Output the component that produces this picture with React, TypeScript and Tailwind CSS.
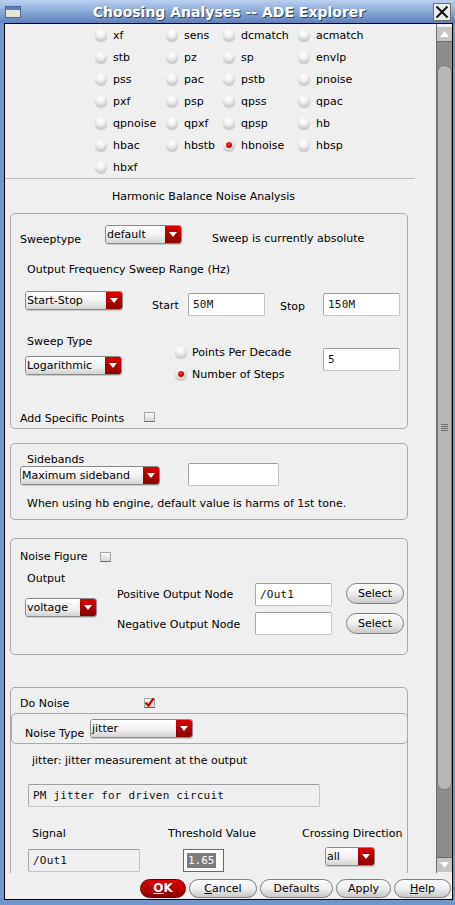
import React from "react";

function Radio({ on }: { on?: boolean }) {
  return (
    <span className="flex h-[12px] w-[12px] shrink-0 items-center justify-center rounded-full bg-[radial-gradient(circle_at_45%_30%,#ffffff_0%,#f0f0f0_40%,#c4c4c4_80%,#9a9a9a_100%)] shadow-[0_1px_1px_rgba(0,0,0,0.2)]">
      {on && (
        <span className="h-[6px] w-[6px] rounded-full bg-[radial-gradient(circle_at_40%_35%,#ff4040,#cc0000_55%,#7a0000)]" />
      )}
    </span>
  );
}

function Drop({ className, text }: { className: string; text: string }) {
  return (
    <div
      className={
        "flex h-[19px] shrink-0 overflow-hidden rounded-[3px] border border-[#8a8a8a] shadow-[0_1px_0_rgba(0,0,0,0.15)] " +
        className
      }
    >
      <div className="flex flex-1 items-center bg-gradient-to-b from-white via-[#f3f3f3] to-[#d4d4d4] pl-[1px] text-[11px] leading-[13px]">
        {text}
      </div>
      <div className="flex w-[16px] items-center justify-center bg-gradient-to-b from-[#dc0000] to-[#8a0000]">
        <svg width="8" height="5" viewBox="0 0 8 5">
          <polygon points="0,0 8,0 4,5" fill="#ffffff" />
        </svg>
      </div>
    </div>
  );
}

function Field({
  className,
  value,
  ro,
}: {
  className: string;
  value: string;
  ro?: boolean;
}) {
  return (
    <div
      className={
        "flex h-[23px] shrink-0 items-center rounded-[2px] border border-[#c4c4c4] border-l-[#a8a8a8] border-t-[#9c9c9c] pl-[4px] font-['DejaVu_Sans_Mono',monospace] text-[11px] tracking-[0.2px] text-[#111] " +
        (ro ? "bg-[#efefef] " : "bg-white ") +
        className
      }
    >
      {value}
    </div>
  );
}

function Check({ on, className }: { on?: boolean; className: string }) {
  return (
    <div
      className={
        "flex h-[10px] w-[11px] shrink-0 items-center justify-center overflow-visible border border-[#a4a4a4] border-b-[#6c6c6c] bg-gradient-to-b from-[#fbfbfb] to-[#d8d8d8] " +
        className
      }
    >
      {on && (
        <svg width="11" height="10" viewBox="0 0 11 10" className="overflow-visible">
          <polyline
            points="1.5,4.5 4.5,7.5 9.5,0.5"
            fill="none"
            stroke="#d00000"
            strokeWidth="2.2"
          />
        </svg>
      )}
    </div>
  );
}

function Pill({ className, children }: { className: string; children: React.ReactNode }) {
  return (
    <div
      className={
        "flex shrink-0 items-center justify-center rounded-full border border-[#7e7e7e] bg-gradient-to-b from-[#fcfcfc] via-[#eeeeee] to-[#c8c8c8] text-[11px] leading-[13px] " +
        className
      }
    >
      {children}
    </div>
  );
}

const rows: string[][] = [
  ["xf", "sens", "dcmatch", "acmatch"],
  ["stb", "pz", "sp", "envlp"],
  ["pss", "pac", "pstb", "pnoise"],
  ["pxf", "psp", "qpss", "qpac"],
  ["qpnoise", "qpxf", "qpsp", "hb"],
  ["hbac", "hbstb", "hbnoise", "hbsp"],
  ["hbxf"],
];

export default function App() {
  return (
    <div className="flex h-[905px] w-[455px] flex-col bg-[#7295cb] font-['DejaVu_Sans',sans-serif] text-[11px] leading-[13px] text-black">
      {/* Title bar */}
      <div className="flex h-[23px] shrink-0 items-center bg-gradient-to-b from-[#bcd0ee] to-[#5c82bc]">
        <div className="ml-[5px] flex h-[12px] w-[16px] flex-col border border-[#4a6894] bg-[#e6e4da]">
          <div className="h-[3px] bg-[#5b7fb8]" />
        </div>
        <div className="flex-1 pl-[4px] text-center text-[14px] font-bold leading-[18px] text-white [text-shadow:1px_1px_0_#2c4266]">
          Choosing Analyses -- ADE Explorer
        </div>
        <div className="mr-[4px] flex h-[18px] w-[18px] items-center justify-center border border-[#6f6f6f] bg-[#ececec]">
          <svg width="14" height="14" viewBox="0 0 14 14">
            <line x1="1.5" y1="1.5" x2="12.5" y2="12.5" stroke="#111" strokeWidth="2" />
            <line x1="12.5" y1="1.5" x2="1.5" y2="12.5" stroke="#111" strokeWidth="2" />
          </svg>
        </div>
      </div>

      {/* Body */}
      <div className="ml-[4px] mr-[2px] flex h-[877px] shrink-0 flex-col border border-black bg-[#efefef]">
        <div className="flex h-[849px] shrink-0">
          {/* viewport */}
          <div className="h-[849px] w-[431px] shrink-0 overflow-hidden">
            <div className="grid grid-cols-[71px_57px_75px_80px] pl-[90px]">
              {rows.map((r, i) =>
                r.map((name) => (
                  <div key={i + name} className="flex h-[22px] items-center gap-[6px]">
                    <Radio on={name === "hbnoise"} />
                    <span>{name}</span>
                  </div>
                ))
              )}
            </div>
            <div className="h-px w-[410px] bg-[#bdbdbd]" />
            <div className="flex h-[34px] items-center pl-[107px]">
              Harmonic Balance Noise Analysis
            </div>

            {/* Box 1 */}
            <div className="ml-[5px] h-[216px] w-[398px] rounded-[5px] border border-[#a9a9a9] pt-[11px]">
              <div className="flex h-[20px] items-start">
                <span className="ml-[9px] mt-[8px] w-[85px]">Sweeptype</span>
                <Drop className="w-[77px]" text="default" />
                <span className="ml-[30px] mt-[7px]">Sweep is currently absolute</span>
              </div>
              <div className="ml-[16px] mt-[18px] h-[13px]">Output Frequency Sweep Range (Hz)</div>
              <div className="mt-[15px] flex h-[25px] items-start">
                <Drop className="ml-[14px] w-[98px]" text="Start-Stop" />
                <span className="ml-[29px] mt-[8px] w-[36px]">Start</span>
                <Field className="mt-[2px] w-[77px]" value="50M" />
                <span className="ml-[15px] mt-[9px] w-[43px]">Stop</span>
                <Field className="mt-[2px] w-[77px]" value="150M" />
              </div>
              <div className="ml-[16px] mt-[19px] h-[11px]">Sweep Type</div>
              <div className="flex h-[34px] items-start">
                <Drop className="ml-[14px] mt-[10px] w-[97px]" text="Logarithmic" />
                <div className="ml-[53px] flex w-[148px] flex-col gap-[10px]">
                  <div className="flex h-[12px] items-center gap-[5px]">
                    <Radio />
                    <span>Points Per Decade</span>
                  </div>
                  <div className="flex h-[12px] items-center gap-[5px]">
                    <Radio on />
                    <span>Number of Steps</span>
                  </div>
                </div>
                <Field className="mt-[2px] w-[77px]" value="5" />
              </div>
              <div className="mt-[32px] flex h-[13px] items-start">
                <span className="ml-[9px] w-[124px]">Add Specific Points</span>
                <Check className="mt-0" />
              </div>
            </div>

            {/* Box 2 */}
            <div className="ml-[5px] mt-[14px] h-[77px] w-[398px] rounded-[5px] border border-[#a9a9a9] pt-[9px]">
              <div className="ml-[16px] h-[10px]">Sidebands</div>
              <div className="flex h-[23px] items-start">
                <Drop className="ml-[9px] mt-[3px] w-[140px]" text="Maximum sideband" />
                <Field className="ml-[28px] w-[91px]" value="" />
              </div>
              <div className="ml-[16px] mt-[11px]">
                When using hb engine, default value is harms of 1st tone.
              </div>
            </div>

            {/* Box 3 */}
            <div className="ml-[5px] mt-[18px] h-[117px] w-[398px] rounded-[5px] border border-[#a9a9a9] pt-[11px]">
              <div className="flex h-[13px] items-start">
                <span className="ml-[9px] w-[80px]">Noise Figure</span>
                <Check className="mt-[2px]" />
              </div>
              <div className="ml-[16px] mt-[9px] h-[11px]">Output</div>
              <div className="flex items-start">
                <Drop className="ml-[14px] mt-[15px] w-[72px]" text="voltage" />
                <div className="ml-[20px] w-[138px]">
                  <div className="mt-[5px]">Positive Output Node</div>
                  <div className="mt-[17px]">Negative Output Node</div>
                </div>
                <div className="flex w-[77px] flex-col gap-[6px]">
                  <Field className="w-[77px]" value="/Out1" />
                  <Field className="w-[77px]" value="" />
                </div>
                <div className="ml-[14px] flex w-[58px] flex-col gap-[9px]">
                  <Pill className="h-[21px] w-[58px]">Select</Pill>
                  <Pill className="h-[21px] w-[58px]">Select</Pill>
                </div>
              </div>
            </div>

            {/* Box 4 */}
            <div className="ml-[5px] mt-[32px] h-[240px] w-[398px] rounded-[5px] border border-[#a9a9a9] pt-[9px]">
              <div className="flex h-[13px] items-start">
                <span className="ml-[9px] w-[124px]">Do Noise</span>
                <Check on className="mt-[1px]" />
              </div>
              <div className="mt-[3px] h-[31px] w-[397px] rounded-[5px] border border-[#a9a9a9] pt-[5px]">
                <div className="flex items-start">
                  <span className="ml-[13px] mt-[8px] w-[65px]">Noise Type</span>
                  <Drop className="w-[103px]" text="jitter" />
                </div>
              </div>
              <div className="ml-[21px] mt-[10px]">jitter: jitter measurement at the output</div>
              <Field ro className="ml-[17px] mt-[17px] w-[292px]" value="PM jitter for driven circuit" />
              <div className="mt-[20px] flex h-[13px]">
                <span className="ml-[21px] w-[136px]">Signal</span>
                <span className="w-[134px]">Threshold Value</span>
                <span>Crossing Direction</span>
              </div>
              <div className="mt-[7px] flex items-start">
                <Field ro className="ml-[17px] mt-[2px] w-[112px]" value="/Out1" />
                <div className="ml-[43px] mt-[2px] flex h-[23px] w-[41px] shrink-0 items-center border border-[#6a6a6a] bg-white pl-[3px] font-['DejaVu_Sans_Mono',monospace] text-[11px]">
                  <span className="bg-[#7d7d7d] px-[1px] leading-[15px] text-white">1.65</span>
                </div>
                <Drop className="ml-[101px] w-[50px]" text="all" />
              </div>
            </div>
          </div>

          {/* Scrollbar */}
          <div className="flex h-[849px] w-[16px] shrink-0 flex-col border-l border-[#6e6e6e] bg-[#8d8d8d]">
            <div className="h-[3px] bg-[#efefef]" />
            <div className="flex h-[15px] items-center justify-center border-b border-[#6a6a6a] bg-[#c4c4c4]">
              <svg width="9" height="6" viewBox="0 0 9 6">
                <polygon points="0,6 9,6 4.5,0" fill="#ffffff" />
              </svg>
            </div>
            <div className="h-[23px]" />
            <div className="flex h-[725px] items-center justify-center rounded-[7px] border border-[#7a7a7a] bg-[#b7b7b7]">
              <div className="flex w-[7px] flex-col gap-[1px]">
                <div className="h-px bg-[#6f6f6f]" />
                <div className="h-px bg-[#6f6f6f]" />
                <div className="h-px bg-[#6f6f6f]" />
                <div className="h-px bg-[#6f6f6f]" />
              </div>
            </div>
            <div className="flex-1" />
            <div className="flex h-[15px] items-center justify-center border-t border-[#6a6a6a] bg-[#c4c4c4]">
              <svg width="9" height="6" viewBox="0 0 9 6">
                <polygon points="0,0 9,0 4.5,6" fill="#ffffff" />
              </svg>
            </div>
            <div className="h-px bg-[#efefef]" />
          </div>
        </div>

        {/* Button bar */}
        <div className="flex h-[26px] shrink-0 items-start justify-end gap-[3px] pr-[1px] pt-[6px]">
          <div className="flex h-[19px] w-[46px] items-center justify-center rounded-full border border-[#6a0000] bg-gradient-to-b from-[#e00000] to-[#8e0000] text-[12px] font-bold text-white">
            <span className="underline">O</span>K
          </div>
          <Pill className="h-[19px] w-[68px]">
            <span className="underline">C</span>ancel
          </Pill>
          <Pill className="h-[19px] w-[73px]">Defaults</Pill>
          <Pill className="h-[19px] w-[55px]">Apply</Pill>
          <Pill className="h-[19px] w-[57px]">
            <span className="underline">H</span>elp
          </Pill>
        </div>
      </div>
    </div>
  );
}
